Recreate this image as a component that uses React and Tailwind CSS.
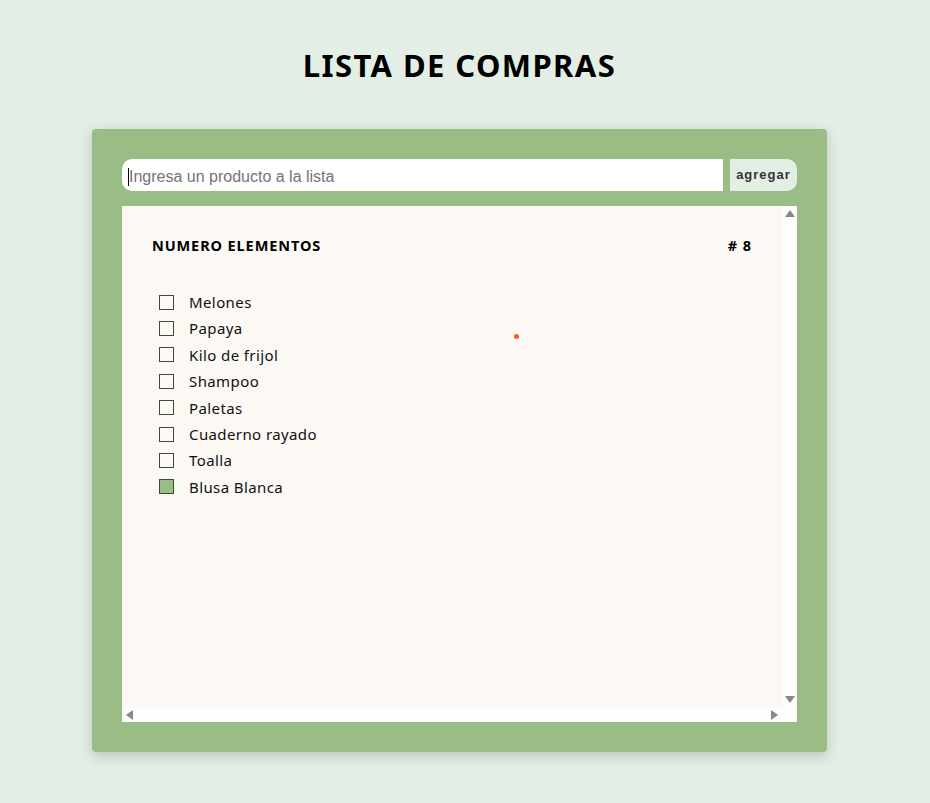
import React from "react";

const items = [
  { name: "Melones", done: false },
  { name: "Papaya", done: false },
  { name: "Kilo de frijol", done: false },
  { name: "Shampoo", done: false },
  { name: "Paletas", done: false },
  { name: "Cuaderno rayado", done: false },
  { name: "Toalla", done: false },
  { name: "Blusa Blanca", done: true },
];

const App = () => {
  return (
    <div className="min-h-[803px] bg-[#e3eee5] flex flex-col items-center pr-[11px] font-['Noto_Sans',sans-serif] text-black">
      <h1 className="mt-[44px] text-[31px] leading-[42px] font-bold tracking-[1.4px]">LISTA DE COMPRAS</h1>

      <div className="mt-[43px] w-[735px] h-[623px] bg-[#9abd86] rounded-[4px] shadow-[0_4px_14px_rgba(0,0,0,0.18)] p-[30px] flex flex-col">
        {/* formulario */}
        <div className="flex h-[32px] gap-[7px]">
          <div className="flex-1 bg-white rounded-l-[10px] flex items-center pl-[6px] pt-[3px]">
            <span className="w-px h-[18px] bg-black" />
            <span className="font-['Liberation_Sans',sans-serif] text-[16px] text-[#757575]">Ingresa un producto a la lista</span>
          </div>
          <button className="w-[67px] bg-[#e3eee5] rounded-r-[10px] font-['Liberation_Sans',sans-serif] text-[13px] font-bold tracking-[1px] text-[#333]">
            agregar
          </button>
        </div>

        {/* lista */}
        <div className="mt-[15px] flex-1 flex flex-col bg-[#fdfdfd]">
          <div className="flex flex-1">
            <div className="flex-1 bg-[#fcf9f5] relative pl-[30px] pr-[30px] pt-[29px]">
              <div className="flex justify-between text-[14.5px] font-bold leading-[20px] tracking-[0.9px]">
                <span>NUMERO ELEMENTOS</span>
                <span># 8</span>
              </div>
              <ul className="mt-[34px] flex flex-col">
                {items.map((item) => (
                  <li key={item.name} className="flex items-center h-[26.4px] pl-[7px]">
                    <span
                      className={`w-[15px] h-[15px] border border-[#3d4a38] ${item.done ? "bg-[#9abd86]" : "bg-transparent"}`}
                    />
                    <span className="ml-[15px] text-[15px] tracking-[0.4px] text-[#111]">{item.name}</span>
                  </li>
                ))}
              </ul>
              <span className="absolute left-[392px] top-[128px] w-[5px] h-[5px] rounded-full bg-[#ff5a1f]" />
            </div>
            {/* scroll vertical */}
            <div className="w-[15px] flex flex-col justify-between items-center py-[4px]">
              <svg width="10" height="7" viewBox="0 0 10 7"><path d="M5 0L10 7H0z" fill="#888" /></svg>
              <svg width="10" height="7" viewBox="0 0 10 7"><path d="M0 0h10L5 7z" fill="#888" /></svg>
            </div>
          </div>
          {/* scroll horizontal */}
          <div className="h-[15px] flex justify-between items-center px-[4px] pr-[19px]">
            <svg width="7" height="10" viewBox="0 0 7 10"><path d="M0 5L7 0v10z" fill="#888" /></svg>
            <svg width="7" height="10" viewBox="0 0 7 10"><path d="M0 0l7 5L0 10z" fill="#888" /></svg>
          </div>
        </div>
      </div>
    </div>
  );
};

export default App;
